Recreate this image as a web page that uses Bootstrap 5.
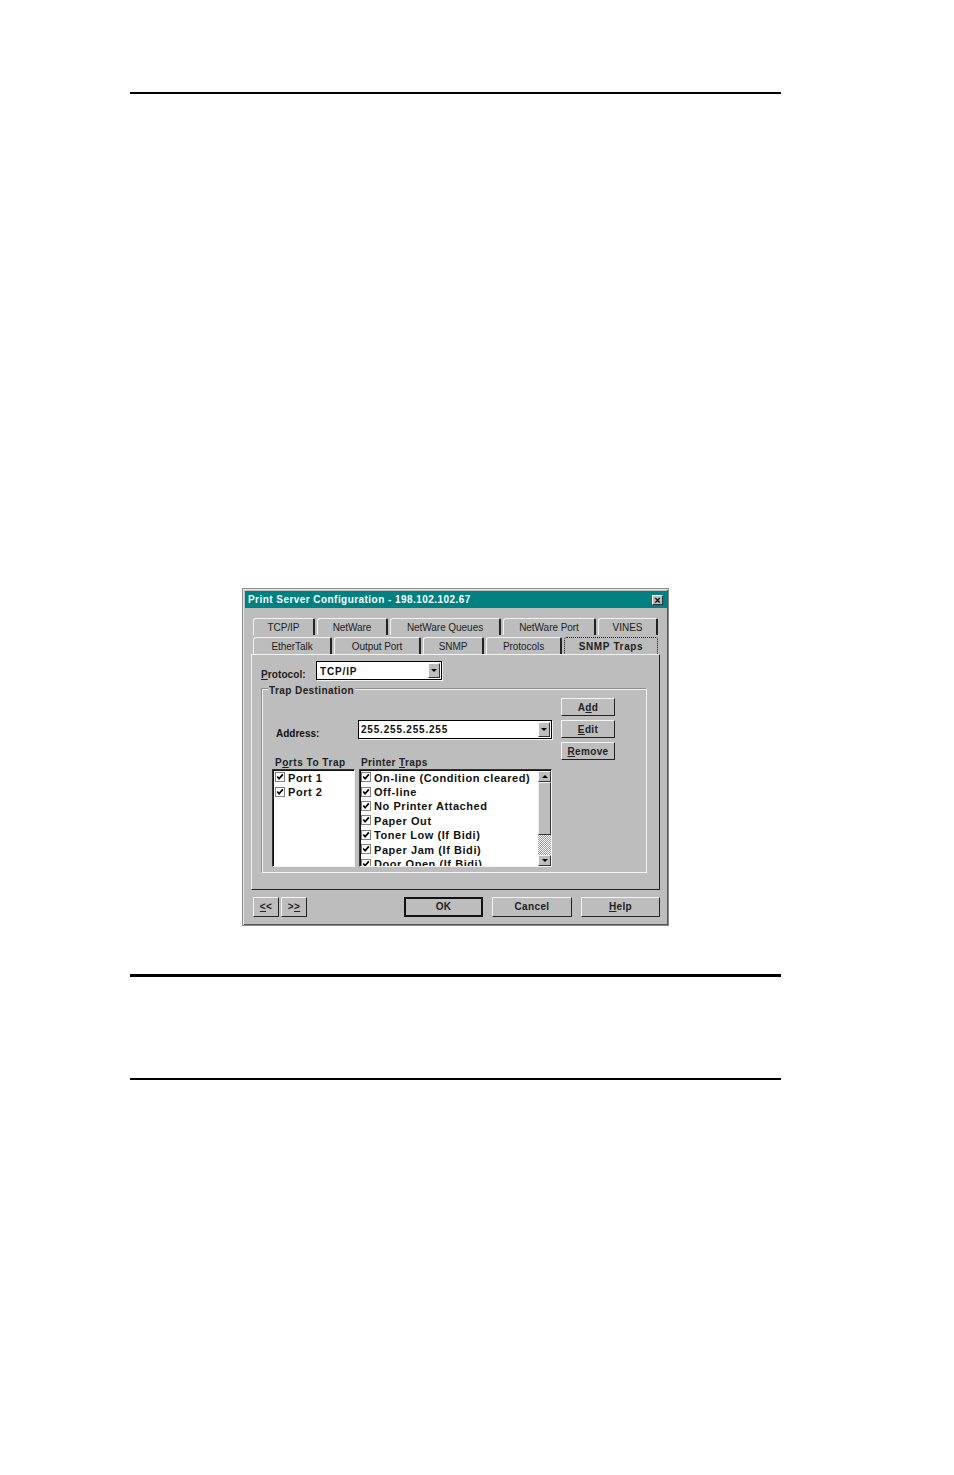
<!DOCTYPE html>
<html lang="en"><head><meta charset="utf-8"><title>Print Server Configuration</title>
<link rel="stylesheet" href="https://cdn.jsdelivr.net/npm/bootstrap@5.3.0/dist/css/bootstrap.min.css">
<style>
html,body{background:#fff;margin:0}
body{width:954px;height:1475px;overflow:hidden;font:400 10px/12px "Liberation Sans",Arial,sans-serif;color:#111}
.page-rule{background:#000;margin-left:130px;width:651px}
.rule-a{height:2px;margin-top:92px}
.rule-b{height:3px;margin-top:48px}
.rule-c{height:2px;margin-top:101px}
.dlg{margin:494px 0 0 242px;width:427px;height:338px;background:#bdbdbd;border:1px solid #8a8a8a;box-shadow:inset 1px 1px 0 #e8e8e8,inset -1px -1px 0 #555;padding:2px}
.ttl{height:17px;margin-right:-1px;background:#008080;color:#fff;font-weight:700;letter-spacing:.45px;padding:0 4px 0 3px;line-height:16px}
.x-btn{width:11px;height:10px;background:#bdbdbd;border:1px solid;border-color:#fff #333 #333 #fff;color:#000;font:700 11px/8px "Liberation Sans",sans-serif;text-align:center;letter-spacing:0;overflow:hidden}
.tabrow{height:17px;margin-left:8px;width:406px;gap:2px;text-align:center;letter-spacing:-.05px}
.tabrow-1{margin-top:10px}
.tabrow-2{margin-top:2px}
.tb{border:1px solid;border-width:1px 2px 0 1px;border-color:#f2f2f2 #222 #bdbdbd #f2f2f2;border-top-left-radius:3px;border-top-right-radius:2px;line-height:17px;color:#222;flex:none}
.tb-on{border:1px dotted #111;font-weight:700;letter-spacing:.65px;height:18px}
.w62{width:62px}.w71{width:71px}.w111{width:111px}.w93{width:93px}.w60{width:60px}.w79{width:79px}.w87{width:87px}.w61{width:61px}.w76{width:76px}.w94{width:94px}
.pnl{margin-left:6px;width:409px;height:236px;border:1px solid;border-color:#f2f2f2 #222 #222 #f2f2f2;padding:6px 9px 0 9px;position:relative}
.proto-row{height:20px}
.lbl{font-weight:700;letter-spacing:.1px;color:#222}
.proto-lbl{width:55px;padding-top:8px}
.sunk{background:#fff;border:1px solid #000;box-shadow:1px 1px 0 #f2f2f2}
.proto-sel{width:126px;height:19px;padding-left:3px;font-weight:700;letter-spacing:.85px;line-height:19px}
.arrow-b{width:12px;background:#bdbdbd;border:1px solid;border-color:#fff #333 #333 #fff;margin:1px;flex:none}
.tri{width:0;height:0;border:3px solid transparent;border-top:3px solid #000;border-bottom:0}
.grp{margin-top:7px;width:386px;height:185px;border:1px solid;border-color:#8f8f8f #f4f4f4 #f4f4f4 #8f8f8f;box-shadow:inset 1px 1px 0 #f0f0f0;position:relative;padding:9px 31px 0 11px}
.grp-t{position:absolute;left:6px;top:-4px;background:#bdbdbd;padding:0 1px;font-weight:700;letter-spacing:.42px;line-height:12px;color:#222}
.l-col{width:279px}
.addr-row{margin-top:22px;height:20px}
.addr-lbl{width:82px;margin-left:3px;padding-top:8px;font-weight:700}
.addr-sel{width:194px;height:19px;padding-left:2px;letter-spacing:.8px;font-weight:700;line-height:18px}
.caps{margin-top:17px;height:12px;line-height:12px}
.cap1{width:86px;margin-left:2px;letter-spacing:.53px;font-weight:700;color:#222}
.cap2{font-weight:700;letter-spacing:.38px;color:#222}
.lists{gap:4px;margin-left:-1px}
.lbox{height:98px;background:#fff;border:1px solid;border-color:#333 #f4f4f4 #f4f4f4 #333;box-shadow:inset 1px 1px 0 #111;overflow:hidden;padding-top:1px;font-size:11px;font-weight:700;letter-spacing:.56px;color:#111;position:relative}
.lb-a{width:83px;padding-left:2px}
.lb-b{width:193px;padding-left:1px;padding-right:13px}
.opt{height:14.4px;line-height:15px;gap:3px;white-space:nowrap}
.chk{width:10px;height:10px;flex:none;display:block;margin-top:-2px}
.sb{position:absolute;right:0;top:1px;bottom:0;width:13px;background:repeating-conic-gradient(#fff 0 25%,#999 0 50%) 0 0/2px 2px}
.sb-b{height:11px;background:#bdbdbd;border:1px solid;border-color:#f4f4f4 #333 #333 #f4f4f4}
.sb-t{height:53px;background:#bdbdbd;border:1px solid;border-color:#f4f4f4 #333 #333 #f4f4f4}
.tri-u{border:3px solid transparent;border-bottom:3px solid #000;border-top:0;width:0;height:0}
.r-col{gap:4px;margin-left:9px}
.wbtn{background:#bdbdbd;border:1px solid;border-color:#f4f4f4 #222 #222 #f4f4f4;font-weight:700;letter-spacing:.35px;text-align:center;color:#222;padding:0}
.wbtn-s{width:54px;height:18px;line-height:17px}
.foot{margin:7px 0 0 8px;width:407px;height:20px}
.wbtn-n{width:26px;height:20px;line-height:17px;margin-right:2px}
.wbtn-f{width:80px;height:20px;line-height:17px}
.wbtn-ok{border:2px solid #111;width:79px;margin-right:9px;line-height:16px}
.wbtn-h{width:79px}
.m9{margin-right:9px}
.grow-gap{flex:1}
</style></head>
<body>
<svg width="0" height="0" class="d-block position-absolute"><defs><symbol id="ck" viewBox="0 0 11 11"><rect x=".5" y=".5" width="10" height="10" fill="#fff" stroke="#777"/><path d="M2.5 5l2 2.4L8.6 2.6" fill="none" stroke="#000" stroke-width="1.9"/></symbol></defs></svg>
<div class="page-rule rule-a"></div>

<div class="dlg">
  <div class="ttl d-flex justify-content-between align-items-center"><span>Print Server Configuration - 198.102.102.67</span><span class="x-btn">×</span></div>
  <div class="tabrow tabrow-1 d-flex">
    <div class="tb w62">TCP/IP</div><div class="tb w71">NetWare</div><div class="tb w111">NetWare Queues</div><div class="tb w93">NetWare Port</div><div class="tb w60">VINES</div>
  </div>
  <div class="tabrow tabrow-2 d-flex">
    <div class="tb w79">EtherTalk</div><div class="tb w87">Output Port</div><div class="tb w61">SNMP</div><div class="tb w76">Protocols</div><div class="tb tb-on w94">SNMP Traps</div>
  </div>
  <div class="pnl">
    <div class="proto-row d-flex">
      <div class="lbl proto-lbl"><u>P</u>rotocol:</div>
      <div class="sunk proto-sel d-flex justify-content-between"><span>TCP/IP</span><span class="arrow-b d-flex align-items-center justify-content-center"><span class="tri"></span></span></div>
    </div>
    <div class="grp d-flex">
      <div class="grp-t">Trap Destination</div>
      <div class="l-col">
        <div class="addr-row d-flex">
          <div class="addr-lbl">Address:</div>
          <div class="sunk addr-sel d-flex justify-content-between"><span>255.255.255.255</span><span class="arrow-b d-flex align-items-center justify-content-center"><span class="tri"></span></span></div>
        </div>
        <div class="caps d-flex"><div class="cap1">P<u>o</u>rts To Trap</div><div class="cap2">Printer <u>T</u>raps</div></div>
        <div class="lists d-flex">
          <div class="lbox lb-a">
            <div class="opt d-flex align-items-center"><svg class="chk"><use href="#ck"/></svg>Port 1</div>
            <div class="opt d-flex align-items-center"><svg class="chk"><use href="#ck"/></svg>Port 2</div>
          </div>
          <div class="lbox lb-b">
            <div class="opt d-flex align-items-center"><svg class="chk"><use href="#ck"/></svg>On-line (Condition cleared)</div>
            <div class="opt d-flex align-items-center"><svg class="chk"><use href="#ck"/></svg>Off-line</div>
            <div class="opt d-flex align-items-center"><svg class="chk"><use href="#ck"/></svg>No Printer Attached</div>
            <div class="opt d-flex align-items-center"><svg class="chk"><use href="#ck"/></svg>Paper Out</div>
            <div class="opt d-flex align-items-center"><svg class="chk"><use href="#ck"/></svg>Toner Low (If Bidi)</div>
            <div class="opt d-flex align-items-center"><svg class="chk"><use href="#ck"/></svg>Paper Jam (If Bidi)</div>
            <div class="opt d-flex align-items-center"><svg class="chk"><use href="#ck"/></svg>Door Open (If Bidi)</div>
            <div class="sb d-flex flex-column">
              <div class="sb-b d-flex align-items-center justify-content-center"><span class="tri-u"></span></div>
              <div class="sb-t"></div>
              <div class="flex-grow-1"></div>
              <div class="sb-b d-flex align-items-center justify-content-center"><span class="tri"></span></div>
            </div>
          </div>
        </div>
      </div>
      <div class="r-col d-flex flex-column">
        <div class="wbtn wbtn-s">A<u>d</u>d</div>
        <div class="wbtn wbtn-s"><u>E</u>dit</div>
        <div class="wbtn wbtn-s"><u>R</u>emove</div>
      </div>
    </div>
  </div>
  <div class="foot d-flex">
    <div class="wbtn wbtn-n"><u>&lt;</u>&lt;</div>
    <div class="wbtn wbtn-n">&gt;<u>&gt;</u></div>
    <div class="grow-gap"></div>
    <div class="wbtn wbtn-f wbtn-ok">OK</div>
    <div class="wbtn wbtn-f m9">Cancel</div>
    <div class="wbtn wbtn-f wbtn-h"><u>H</u>elp</div>
  </div>
</div>

<div class="page-rule rule-b"></div>
<div class="page-rule rule-c"></div>
</body></html>
